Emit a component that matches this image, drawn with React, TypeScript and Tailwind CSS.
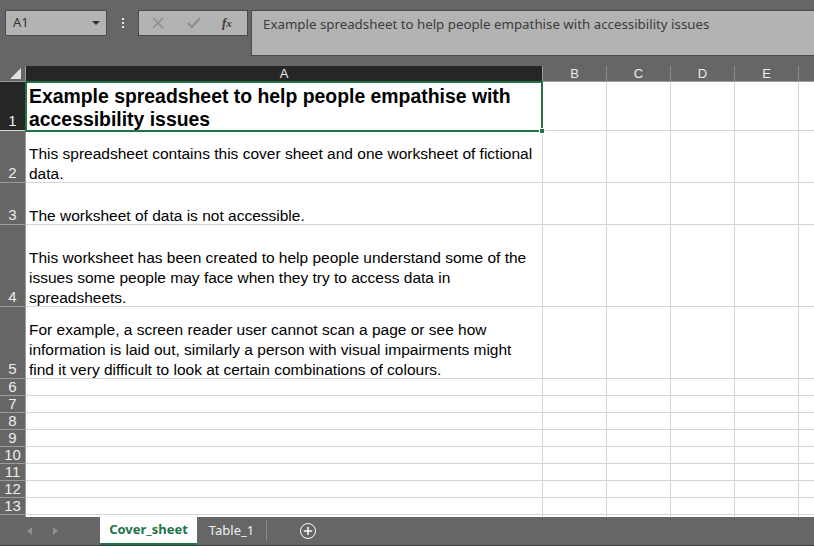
import { Plus } from 'lucide-react';

const rows: { h: string; text: string; title?: boolean }[] = [
    { h: 'h-[49px]', text: 'Example spreadsheet to help people empathise with accessibility issues', title: true },
    { h: 'h-[52px]', text: 'This spreadsheet contains this cover sheet and one worksheet of fictional data.' },
    { h: 'h-[42px]', text: 'The worksheet of data is not accessible.' },
    {
        h: 'h-[82px]',
        text: 'This worksheet has been created to help people understand some of the issues some people may face when they try to access data in spreadsheets.',
    },
    {
        h: 'h-[72px]',
        text: 'For example, a screen reader user cannot scan a page or see how information is laid out, similarly a person with visual impairments might find it very difficult to look at certain combinations of colours.',
    },
];

const emptyRows = [6, 7, 8, 9, 10, 11, 12, 13];
const otherCols = ['B', 'C', 'D', 'E'];

const uiFont = { fontFamily: '"Noto Sans", "Open Sans", sans-serif' };
const cellFont = { fontFamily: '"Liberation Sans", Arial, sans-serif' };

const EmptyCells = () => (
    <>
        {otherCols.map((c) => (
            <div key={c} className="w-[64px] shrink-0 border-r border-[#d4d4d4]" />
        ))}
        <div className="flex-1" />
    </>
);

export default function App() {
    return (
        <div className="w-[814px] h-[546px] overflow-hidden bg-[#666666] flex flex-col" style={uiFont}>
            {/* formula bar area */}
            <div className="h-[66px] shrink-0 flex items-start pt-[10px] pl-[5px]">
                <div className="w-[102px] h-[26px] bg-[#b3b3b3] border border-[#4a4a4a] flex items-center justify-between pl-[7px] pr-[6px] text-[13px] text-[#333]">
                    <span>A1</span>
                    <svg width="8" height="5" viewBox="0 0 8 5">
                        <path d="M0 0H8L4 4Z" fill="#333" />
                    </svg>
                </div>
                <div className="w-[31px] h-[26px] flex flex-col items-center justify-center gap-[2px]">
                    <span className="w-[2px] h-[2px] bg-[#e6e6e6]" />
                    <span className="w-[2px] h-[2px] bg-[#e6e6e6]" />
                    <span className="w-[2px] h-[2px] bg-[#e6e6e6]" />
                </div>
                <div className="w-[110px] h-[26px] bg-[#b3b3b3] border border-[#4a4a4a] flex items-center">
                    <svg width="12" height="12" viewBox="0 0 12 12" className="ml-[13px]">
                        <path d="M1 1L11 11M11 1L1 11" stroke="#8c8c8c" strokeWidth="1.4" />
                    </svg>
                    <svg width="14" height="12" viewBox="0 0 14 12" className="ml-[23px]">
                        <path d="M1 6L5 10L13 1" stroke="#8c8c8c" strokeWidth="2" fill="none" />
                    </svg>
                    <span className="ml-[21px] text-[13px] italic text-[#3a3a3a] font-bold" style={{ fontFamily: '"Liberation Serif", serif' }}>
                        f<span className="text-[11px]">x</span>
                    </span>
                </div>
                <div className="ml-[3px] flex-1 h-[46px] bg-[#b3b3b3] border border-[#4a4a4a] border-r-0 pl-[11px] pt-[4px] text-[13.3px] text-[#3c3c3c]">
                    Example spreadsheet to help people empathise with accessibility issues
                </div>
            </div>

            {/* sheet */}
            <div className="flex-1 flex flex-col overflow-hidden bg-white">
                {/* column headers */}
                <div className="h-[16px] shrink-0 flex bg-[#666666] border-b border-[#9b9b9b] text-[13px] leading-[15px] text-[#ececec]" style={cellFont}>
                    <div className="w-[26px] shrink-0 relative border-r border-[#9b9b9b]">
                        <svg width="11" height="11" viewBox="0 0 11 11" className="absolute right-[4px] bottom-[2px]">
                            <path d="M11 0V11H0Z" fill="#e0e0e0" />
                        </svg>
                    </div>
                    <div className="w-[517px] shrink-0 bg-[#262626] border-r border-[#9b9b9b] text-center">A</div>
                    {otherCols.map((c) => (
                        <div key={c} className="w-[64px] shrink-0 border-r border-[#8a8a8a] text-center">
                            {c}
                        </div>
                    ))}
                    <div className="flex-1" />
                </div>

                {rows.map((r, i) => (
                    <div key={i} className={`${r.h} shrink-0 flex border-b border-[#d4d4d4]`}>
                        <div
                            className={`w-[26px] shrink-0 flex items-end justify-center pb-[1px] text-[15px] leading-[17px] text-[#ececec] border-r border-[#9b9b9b] ${
                                i === 0 ? 'bg-[#262626]' : 'bg-[#666666] border-b border-[#9b9b9b] -mb-px'
                            }`}
                            style={cellFont}
                        >
                            {i + 1}
                        </div>
                        <div
                            className={`w-[517px] shrink-0 border-r border-[#d4d4d4] flex items-end px-[3px] text-black ${
                                r.title ? 'text-[19.4px] font-bold leading-[23px] pb-0' : 'text-[15.5px] leading-[20px]'
                            } ${i === 0 ? 'relative' : ''}`}
                            style={cellFont}
                        >
                            <span className={r.title ? '-mb-px' : '-mb-[2px]'}>{r.text}</span>
                            {i === 0 && (
                                <div className="absolute -left-px -top-px -right-px -bottom-[2px] border-2 border-[#217346] pointer-events-none">
                                    <span className="absolute -right-[4px] -bottom-[4px] w-[6px] h-[6px] bg-[#217346] border border-white" />
                                </div>
                            )}
                        </div>
                        <EmptyCells />
                    </div>
                ))}

                {emptyRows.map((n) => (
                    <div key={n} className="h-[17px] shrink-0 flex border-b border-[#d4d4d4]">
                        <div
                            className="w-[26px] shrink-0 bg-[#666666] border-r border-b -mb-px border-[#9b9b9b] flex items-end justify-center text-[15px] leading-[16px] text-[#ececec]"
                            style={cellFont}
                        >
                            {n}
                        </div>
                        <div className="w-[517px] shrink-0 border-r border-[#d4d4d4]" />
                        <EmptyCells />
                    </div>
                ))}
                <div className="flex-1 flex">
                    <div className="w-[26px] shrink-0 bg-[#666666] border-r border-[#9b9b9b]" />
                    <div className="w-[517px] shrink-0 border-r border-[#d4d4d4]" />
                    <EmptyCells />
                </div>
            </div>

            {/* sheet tabs */}
            <div className="h-[29px] shrink-0 bg-[#666666] flex items-stretch border-b border-[#3a3a3a]">
                <div className="w-[100px] shrink-0 flex items-center pl-[27px] gap-[21px]">
                    <svg width="5" height="8" viewBox="0 0 5 8">
                        <path d="M5 0V8L0 4Z" fill="#8f8f8f" />
                    </svg>
                    <svg width="5" height="8" viewBox="0 0 5 8">
                        <path d="M0 0V8L5 4Z" fill="#8f8f8f" />
                    </svg>
                </div>
                <div className="w-[97px] bg-white border-b-2 border-[#217346] flex items-center justify-center text-[13px] font-bold text-[#217346]">
                    Cover_sheet
                </div>
                <div className="w-[69px] flex items-center justify-center text-[13px] text-[#f0f0f0]">Table_1</div>
                <div className="w-px my-[4px] bg-[#8a8a8a]" />
                <div className="ml-[33px] flex items-center">
                    <div className="w-[16px] h-[16px] rounded-full border-[1.5px] border-white flex items-center justify-center">
                        <Plus size={12} strokeWidth={3} color="white" />
                    </div>
                </div>
            </div>
        </div>
    );
}
